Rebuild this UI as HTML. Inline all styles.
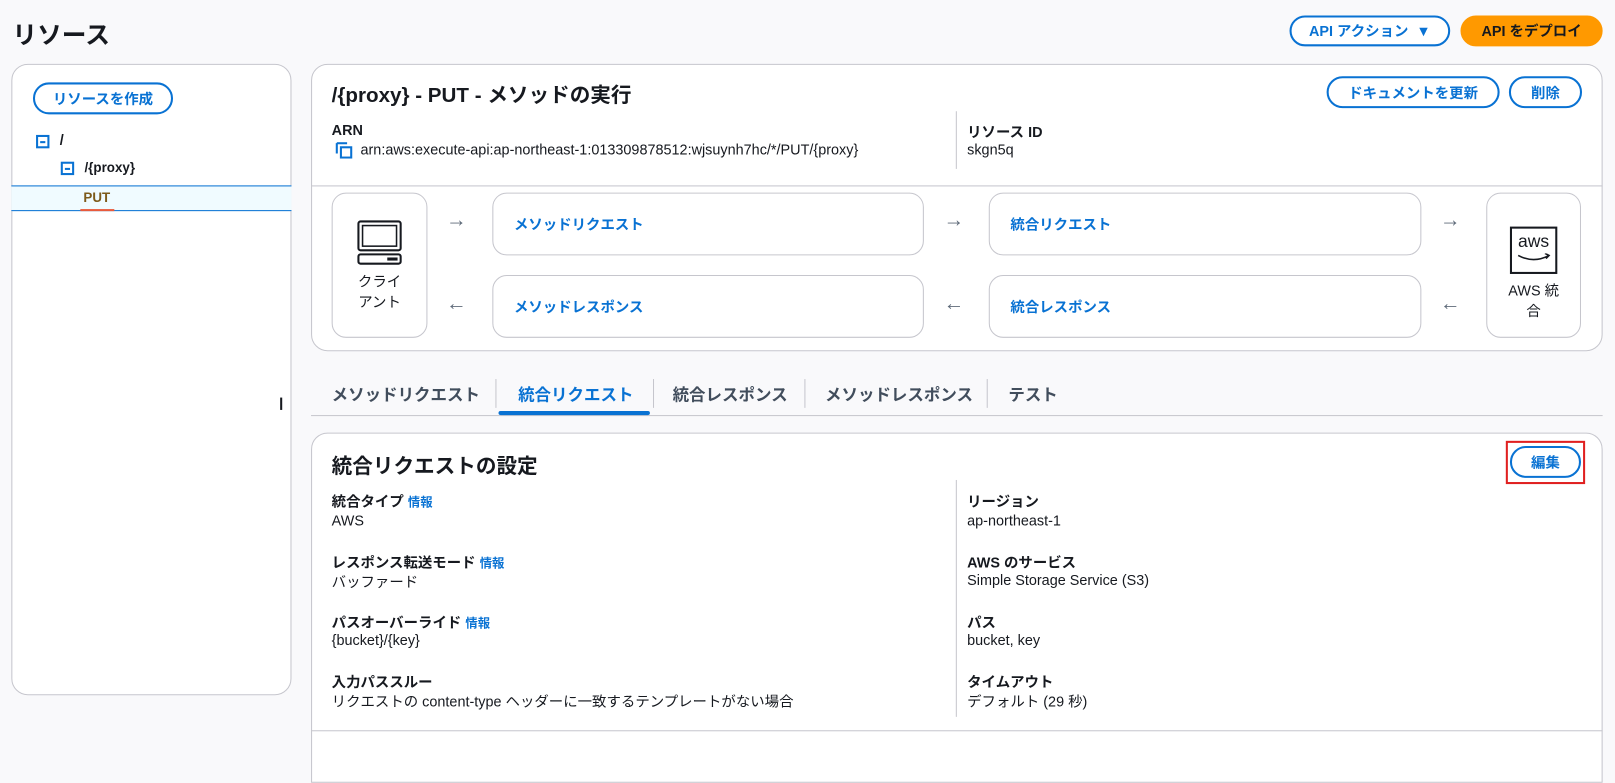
<!DOCTYPE html>
<html><head><meta charset="utf-8"><style>
*{box-sizing:border-box;margin:0;padding:0}
html,body{width:1615px;height:746px;overflow:hidden}
body{background:#f9f9fb;font-family:"Liberation Sans","Noto Sans CJK JP",sans-serif;color:#16191f;font-size:14px}
#w{position:absolute;left:0;top:0;width:1568px;height:725px;transform:scale(1.02997);transform-origin:0 0}
.a{position:absolute}
.btn{position:absolute;border:2px solid #0972d3;border-radius:20px;color:#0972d3;font-weight:bold;font-size:14px;display:flex;align-items:center;justify-content:center;background:#fff}
.panel{position:absolute;background:#fff;border:1px solid #c6c6cd;border-radius:16px}
.box{position:absolute;border:1px solid #c6c6cd;border-radius:14px;background:#fff}
.lnk{color:#0972d3;font-weight:bold;font-size:14px}
.arr{position:absolute;color:#5f6b7a;font-size:20px}
.lbl{position:absolute;font-weight:bold;font-size:14px}
.val{position:absolute;font-size:14px}
.info{color:#0972d3;font-size:12px;font-weight:bold;margin-left:4px}
</style></head><body><div id="w">
<div class="a" style="left:12px;top:14px;font-size:24px;font-weight:bold">リソース</div>
<div class="btn" style="left:1252px;top:15px;width:156px;height:30px">API アクション&nbsp;&nbsp;▼</div>
<div class="btn" style="left:1418px;top:15px;width:138px;height:30px;background:#ff9900;border-color:#ff9900;color:#16191f;border-radius:16px">API をデプロイ</div>

<div class="panel" style="left:11px;top:62px;width:272px;height:613px"></div>
<div class="btn" style="left:32px;top:80px;width:136px;height:31px">リソースを作成</div>
<div class="a" style="left:35px;top:131px;width:13px;height:13px;border:2px solid #0972d3"><div style="margin:3.5px 2px;height:2px;background:#0972d3"></div></div>
<div class="a" style="left:58px;top:128px;font-weight:bold">/</div>
<div class="a" style="left:59px;top:157px;width:13px;height:13px;border:2px solid #0972d3"><div style="margin:3.5px 2px;height:2px;background:#0972d3"></div></div>
<div class="a" style="left:82px;top:155px;font-weight:bold;font-size:13px">/{proxy}</div>
<div class="a" style="left:11px;top:180px;width:272px;height:25px;background:#f0fbff;border-top:1px solid #0972d3;border-bottom:1px solid #0972d3"></div>
<div class="a" style="left:81px;top:184px;font-weight:bold;font-size:13px;color:#7d5a1a">PUT</div>
<div class="a" style="left:78px;top:203px;width:33px;height:2px;background:#e85a3c"></div>
<div class="a" style="left:272px;top:386px;width:2px;height:12px;background:#16191f"></div>

<div class="panel" style="left:302px;top:62px;width:1254px;height:279px"></div>
<div class="a" style="left:302px;top:180px;width:1254px;height:1px;background:#c6c6cd"></div>
<div class="a" style="left:322px;top:76px;font-size:20px;font-weight:bold">/{proxy} - PUT - メソッドの実行</div>
<div class="btn" style="left:1288px;top:74px;width:168px;height:31px">ドキュメントを更新</div>
<div class="btn" style="left:1465px;top:74px;width:71px;height:31px">削除</div>
<div class="lbl" style="left:322px;top:118px">ARN</div>
<svg class="a" style="left:325px;top:138px" width="18" height="16"><path d="M2 1v10M2 1h10" stroke="#0972d3" stroke-width="2" fill="none"/><rect x="6" y="5" width="10" height="10" stroke="#0972d3" stroke-width="2" fill="none"/></svg>
<div class="val" style="left:350px;top:137px">arn:aws:execute-api:ap-northeast-1:013309878512:wjsuynh7hc/*/PUT/{proxy}</div>
<div class="a" style="left:928px;top:108px;width:1px;height:56px;background:#c6c6cd"></div>
<div class="lbl" style="left:939px;top:118px">リソース ID</div>
<div class="val" style="left:939px;top:137px">skgn5q</div>

<div class="box" style="left:322px;top:187px;width:93px;height:141px"></div>
<svg class="a" style="left:346px;top:213px" width="46" height="45"><rect x="2" y="2" width="41" height="28" rx="2" fill="none" stroke="#16191f" stroke-width="2"/><rect x="6" y="6" width="33" height="20" fill="none" stroke="#16191f" stroke-width="1.5"/><rect x="2" y="34" width="41" height="9" rx="2" fill="none" stroke="#16191f" stroke-width="2"/><rect x="30" y="37" width="10" height="3" fill="#16191f"/></svg>
<div class="a" style="left:322px;top:263px;width:93px;text-align:center;font-size:14px;line-height:20px">クライ<br>アント</div>
<div class="arr" style="left:433px;top:203px">→</div>
<div class="arr" style="left:433px;top:284px">←</div>
<div class="box" style="left:478px;top:187px;width:419px;height:61px"></div>
<div class="lnk a" style="left:499px;top:208px">メソッドリクエスト</div>
<div class="box" style="left:478px;top:267px;width:419px;height:61px"></div>
<div class="lnk a" style="left:499px;top:288px">メソッドレスポンス</div>
<div class="arr" style="left:916px;top:203px">→</div>
<div class="arr" style="left:916px;top:284px">←</div>
<div class="box" style="left:960px;top:187px;width:420px;height:61px"></div>
<div class="lnk a" style="left:981px;top:208px">統合リクエスト</div>
<div class="box" style="left:960px;top:267px;width:420px;height:61px"></div>
<div class="lnk a" style="left:981px;top:288px">統合レスポンス</div>
<div class="arr" style="left:1398px;top:203px">→</div>
<div class="arr" style="left:1398px;top:284px">←</div>
<div class="box" style="left:1443px;top:187px;width:92px;height:141px"></div>
<div class="a" style="left:1466px;top:220px;width:46px;height:46px;border:2px solid #16191f;text-align:center;font-size:17px;line-height:26px">aws<svg class="a" style="left:4px;top:24px" width="36" height="10"><path d="M2 2q15 8 30 0M28 0l4 2-3 3" stroke="#16191f" stroke-width="1.5" fill="none"/></svg></div>
<div class="a" style="left:1443px;top:272px;width:92px;text-align:center;line-height:20px">AWS 統<br>合</div>

<div class="a" style="left:302px;top:403px;width:1254px;height:1px;background:#c6c6cd"></div>
<div class="a" style="left:322px;top:370px;font-size:16px;color:#414d5c;font-weight:bold">メソッドリクエスト</div>
<div class="a" style="left:481px;top:368px;width:1px;height:28px;background:#c6c6cd"></div>
<div class="a" style="left:503px;top:370px;font-size:16px;color:#0972d3;font-weight:bold">統合リクエスト</div>
<div class="a" style="left:484px;top:399px;width:147px;height:4px;background:#0972d3;border-radius:2px"></div>
<div class="a" style="left:634px;top:368px;width:1px;height:28px;background:#c6c6cd"></div>
<div class="a" style="left:653px;top:370px;font-size:16px;color:#414d5c;font-weight:bold">統合レスポンス</div>
<div class="a" style="left:781px;top:368px;width:1px;height:28px;background:#c6c6cd"></div>
<div class="a" style="left:801px;top:370px;font-size:16px;color:#414d5c;font-weight:bold">メソッドレスポンス</div>
<div class="a" style="left:958px;top:368px;width:1px;height:28px;background:#c6c6cd"></div>
<div class="a" style="left:979px;top:370px;font-size:16px;color:#414d5c;font-weight:bold">テスト</div>

<div class="panel" style="left:302px;top:420px;width:1254px;height:340px;border-bottom-left-radius:0;border-bottom-right-radius:0"></div>
<div class="a" style="left:302px;top:709px;width:1254px;height:1px;background:#c6c6cd"></div>
<div class="a" style="left:322px;top:436px;font-size:20px;font-weight:bold">統合リクエストの設定</div>
<div class="a" style="left:1462px;top:428px;width:77px;height:42px;border:2px solid #e02020"></div>
<div class="btn" style="left:1466px;top:433px;width:69px;height:31px">編集</div>
<div class="a" style="left:928px;top:466px;width:1px;height:230px;background:#c6c6cd"></div>
<div class="lbl" style="left:322px;top:477px">統合タイプ<span class="info">情報</span></div>
<div class="val" style="left:322px;top:497px">AWS</div>
<div class="lbl" style="left:322px;top:536px">レスポンス転送モード<span class="info">情報</span></div>
<div class="val" style="left:322px;top:555px">バッファード</div>
<div class="lbl" style="left:322px;top:594px">パスオーバーライド<span class="info">情報</span></div>
<div class="val" style="left:322px;top:613px">{bucket}/{key}</div>
<div class="lbl" style="left:322px;top:652px">入力パススルー</div>
<div class="val" style="left:322px;top:671px">リクエストの content-type ヘッダーに一致するテンプレートがない場合</div>
<div class="lbl" style="left:939px;top:477px">リージョン</div>
<div class="val" style="left:939px;top:497px">ap-northeast-1</div>
<div class="lbl" style="left:939px;top:536px">AWS のサービス</div>
<div class="val" style="left:939px;top:555px">Simple Storage Service (S3)</div>
<div class="lbl" style="left:939px;top:594px">パス</div>
<div class="val" style="left:939px;top:613px">bucket, key</div>
<div class="lbl" style="left:939px;top:652px">タイムアウト</div>
<div class="val" style="left:939px;top:671px">デフォルト (29 秒)</div>
</div></body></html>
